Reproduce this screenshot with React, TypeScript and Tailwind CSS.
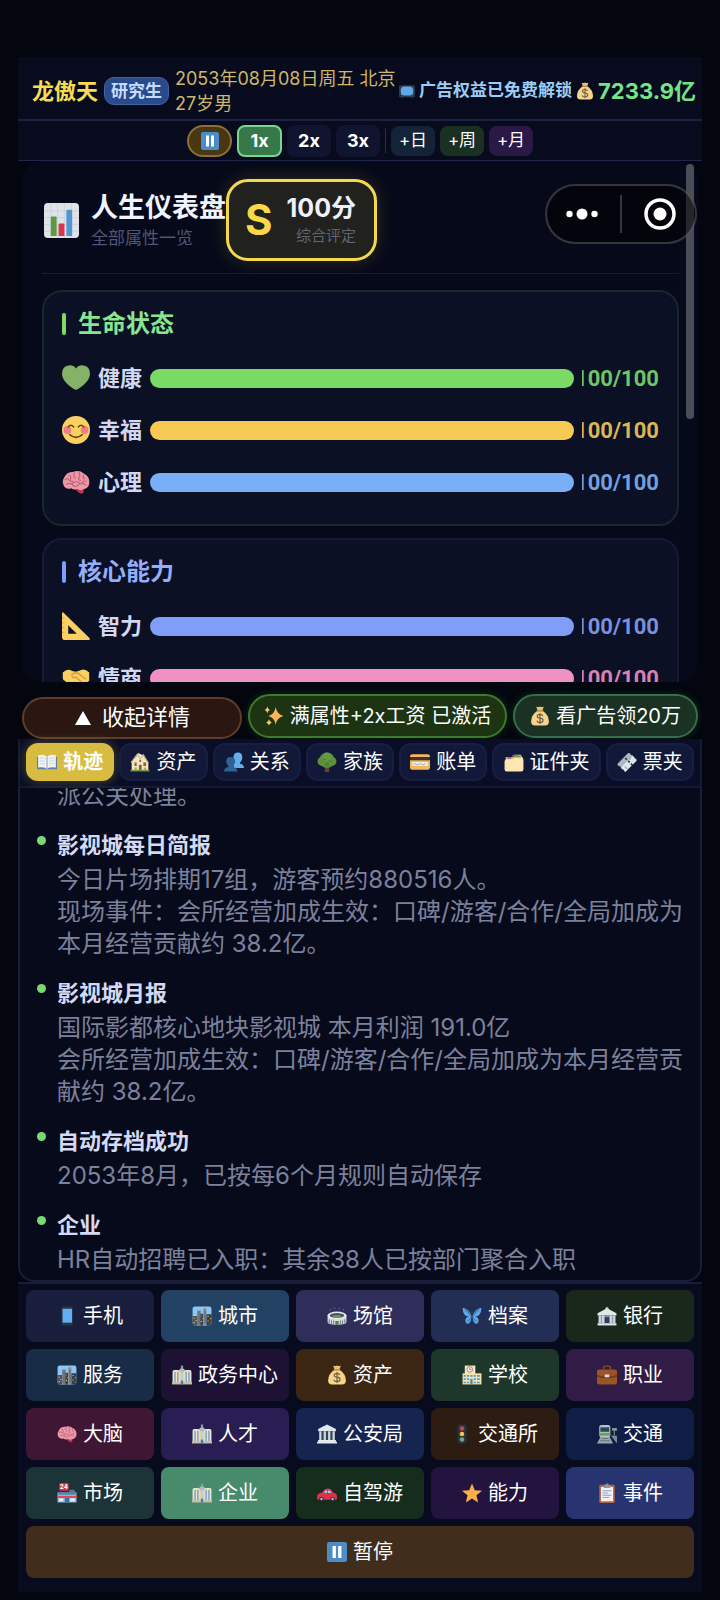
import type { ReactNode } from "react";
import clsx from "clsx";

interface IconProps {
  name: string;
  className?: string;
}

const officeBlock = (
  <>
    <path d="M16 1h4v9h-4z" fill="#8a97a5" />
    <path d="M12 10q6-8 12 0v24H12z" fill="#b3bcc5" />
    <path d="M1 12q0-3 3-3h6q4 0 4 3v20H1zM22 12q0-3 4-3h6q3 0 3 3v20H22z" fill="#efe4c6" />
    <path d="M4 12h3v19H4zM9 12h3v19H9zM24 12h3v19h-3zM29 12h3v19h-3z" fill="#86a9cf" />
    <path d="M15 13h2v18h-2zM19 13h2v18h-2z" fill="#f0dfae" />
    <path d="M0 31h36v4H0z" fill="#c9bfa6" />
    <path d="M16 28h4v7h-4z" fill="#4a78a8" />
  </>
);

const skyline = (
  <>
    <rect x="1" y="1" width="34" height="34" rx="4" fill="#8cc6f5" />
    <path d="M1 18h8v17H5q-4 0-4-4z" fill="#4b5560" />
    <path d="M9 8h7v27H9z" fill="#7d868f" />
    <path d="M15 14h5v21h-5z" fill="#39434d" />
    <path d="M20 5l3-2 3 2v30h-6z" fill="#8b949d" />
    <path d="M26 15h9v16q0 4-4 4h-5z" fill="#343e48" />
    <path d="M11 10h1v23h-1zM13 10h1v23h-1zM22 8h1v24h-1zM24 8h1v24h-1z" fill="#5a646e" />
    <path
      d="M3 21h2v2H3zM6 25h2v2H6zM3 29h2v2H3zM16 17h1v2h-1zM18 22h1v2h-1zM16 27h2v2h-2zM28 18h2v2h-2zM32 22h2v2h-2zM28 26h2v2h-2zM32 30h1v2h-1z"
      fill="#f3cf5b"
    />
  </>
);

const ICONS: Record<string, ReactNode> = {
  pause: (
    <>
      <rect width="36" height="36" rx="4" fill="#4a8dc8" />
      <path d="M10 7h6v22h-6zM20 7h6v22h-6z" fill="#fff" />
    </>
  ),
  tv: (
    <>
      <rect y="5" width="36" height="27" rx="3" fill="#2c3a4a" />
      <rect x="4" y="8" width="28" height="20" rx="8" fill="#61a6ea" />
      <path d="M5 32h5v2H5zM26 32h5v2h-5z" fill="#2c3a4a" />
    </>
  ),
  money: (
    <>
      <path d="M11 1q3 2 7 0 4 2 7 0l-3 8h-8z" fill="#e8c27a" />
      <path d="M14 8h8q12 8 12 20 0 7-7 7H9q-7 0-7-7Q2 16 14 8z" fill="#f7d48c" />
      <path d="M12 7.500h12v2.500H12z" fill="#b5883f" />
      <path
        d="M23 18q-1-3-5-3-5 0-5 3.500 0 3 5 3.500 5.500.500 5.500 4T18 30q-5 0-5.500-3.500M18 12.500v20"
        fill="none"
        stroke="#6d604a"
        strokeWidth="2.200"
      />
    </>
  ),
  chart: (
    <>
      <rect width="36" height="36" rx="4" fill="#dfe3e8" />
      <path
        d="M0 8h36M0 15h36M0 22h36M0 29h36M7 0v36M14 0v36M21 0v36M28 0v36"
        stroke="#cbd3da"
        strokeWidth="1"
      />
      <path d="M7 15q0-1 1-1h4q1 0 1 1v19H7z" fill="#5c9a41" />
      <path d="M15 22q0-1 1-1h4q1 0 1 1v12h-6z" fill="#d73848" />
      <path d="M23 8q0-1 1-1h4q1 0 1 1v26h-6z" fill="#5296d5" />
    </>
  ),
  heart: (
    <path
      d="M35.900 11.800A9.900 9.900 0 0 0 18 5.700 9.900 9.900 0 0 0 .100 11.800C-.700 20 9 29 18 33.500 27 29 36.700 20 35.900 11.800z"
      fill="#84b266"
    />
  ),
  smile: (
    <>
      <circle cx="18" cy="18" r="18" fill="#fbd062" />
      <circle cx="7" cy="18" r="5" fill="#ee7f84" />
      <circle cx="29" cy="18" r="5" fill="#ee7f84" />
      <path
        d="M8 14q3.500-4 7 0M21 14q3.500-4 7 0M10 24q8 7 16 0"
        fill="none"
        stroke="#664500"
        strokeWidth="2"
        strokeLinecap="round"
      />
    </>
  ),
  brain: (
    <>
      <path d="M18 26q5-2 9 1 2 4-1 6-4 0-8-5z" fill="#c8364a" />
      <path
        d="M3 24Q-1 18 3 12 6 5 14 5q8-3 14 2 8 4 7 12 0 6-6 8-5 3-9 0-5 2-8-1-6 2-9-2z"
        fill="#ee97a6"
      />
      <path
        d="M4 15q4-3 5 1M9 9q3 1 2 5t3 3M16 6q-2 4 1 7M22 6q2 3 0 6t2 4M28 9q-2 3 1 5M31 17q-4-1-5 2M6 21q5-3 8 1t8-1q4-3 9 1M13 20q5-4 9-1"
        fill="none"
        stroke="#ba6577"
        strokeWidth="1.500"
        strokeLinecap="round"
      />
    </>
  ),
  ruler: (
    <>
      <path d="M0 2Q0-1 2 1l33 32q2 3-1 3H4q-4 0-4-4zM8 17v11h11z" fill="#fbcf62" fillRule="evenodd" />
      <path d="M0 8h3M0 14h3M0 20h3M0 26h3" stroke="#d39b35" strokeWidth="1" />
    </>
  ),
  handshake: (
    <>
      <path d="M1 11q6-6 12-2l5 1 6-2q5-3 11 3v11q-3 1-6 5l-8 5q-4 2-7-1L4 22q-3-1-3-4z" fill="#f9cf62" />
      <path
        d="M13 13q4-3 8-1l9 7M13 13q-1 6 5 4l8 7M8 24l4 5M13 27l3 4"
        fill="none"
        stroke="#d99b36"
        strokeWidth="1.800"
        strokeLinecap="round"
      />
    </>
  ),
  up: <path d="M18 4l16 28H2z" fill="#fff" />,
  sparkles: (
    <>
      <path d="M21 2q2 13 14 16-12 3-14 16-2-13-13-16 11-3 13-16z" fill="#fdb257" />
      <path d="M6 1q1 5 5 6-4 1-5 6-1-5-5-6 4-1 5-6zM9 24q1 5 5 6-4 1-5 5-1-4-5-5 4-1 5-6z" fill="#fdcb62" />
    </>
  ),
  book: (
    <>
      <path d="M0 9h36v22H0z" fill="#5b82a5" />
      <path d="M2 6q9-3 16 2 7-5 16-2v22q-9-2-16 2-7-4-16-2z" fill="#eef2f5" />
      <path d="M18 8v22" stroke="#9aa7b2" strokeWidth="2" />
      <path
        d="M5 11q5-1 9 1M5 16q5-1 9 1M5 21q5-1 9 1M22 12q4-2 9-1M22 17q4-2 9-1M22 22q4-2 9-1"
        stroke="#c6cfd6"
        strokeWidth="1.500"
        fill="none"
      />
    </>
  ),
  house: (
    <>
      <path d="M3 18L12 7l3-5 4 2 5 2 2 4 7 10v13H3z" fill="#f4e5bd" />
      <path d="M2 19L13 4l5 7M18 13l6-8 9 15" stroke="#cdbd94" strokeWidth="2" fill="none" />
      <path d="M8 19h4v6H8zM17 14h3v4h-3zM24 19h5v6h-5z" fill="#7c6a48" />
      <path d="M16 23h5v10h-5z" fill="#8a6439" />
      <path d="M1 32h34v3H1z" fill="#6e9c45" />
      <path d="M8 28h4v5H8zM25 28h4v5h-4z" fill="#c79f55" />
    </>
  ),
  people: (
    <>
      <path d="M25 1q8 0 8 9 0 6-4 9v2q7 1 7 8H17v-9q3 0 3-2-3-3-3-8 0-9 8-9z" fill="#65aef0" />
      <path d="M12 9q8 0 8 8 0 5-4 8v2q8 1 8 8H0q0-7 8-8v-2q-4-3-4-8 0-8 8-8z" fill="#2f6296" />
    </>
  ),
  tree: (
    <>
      <path d="M15 22h6l1 14h-8z" fill="#6b4329" />
      <circle cx="18" cy="15" r="14" fill="#568a3d" />
      <circle cx="9" cy="17" r="8" fill="#5c913e" />
      <circle cx="27" cy="17" r="8" fill="#5c913e" />
      <circle cx="18" cy="9" r="8" fill="#639a43" />
      <path d="M11 12q2 3 5 1M21 16q2 2 5 0M15 21q3 2 6 0" stroke="#3d6b2b" strokeWidth="1.500" fill="none" />
    </>
  ),
  card: (
    <>
      <rect y="4" width="36" height="28" rx="4" fill="#f6b65a" />
      <path d="M0 9h36v6H0z" fill="#3d3328" />
      <path d="M4 18h28v7H4z" fill="#f3ede0" />
      <path d="M6 22q3-3 5 0t5 0 5 0 7-1" stroke="#7390b5" strokeWidth="1.200" fill="none" />
    </>
  ),
  folder: (
    <>
      <path d="M3 9h14l3-4h10l4 6v8H3z" fill="#f3b85b" />
      <path d="M4 12h9v-3H7zM14 8h9V5h-7z" fill="#8e5bb5" />
      <path d="M17 11h13V7l-9-2z" fill="#6c9d45" />
      <path d="M1 17q0-4 4-4h11l3-3h12q4 0 4 4v17q0 4-4 4H5q-4 0-4-4z" fill="#fbe6b4" />
    </>
  ),
  ticket: (
    <>
      <path d="M1 21L20 2q2-1 4 1 0 3 4 3 2 2 1 4L10 29q-2 1-3-1 0-3-4-3-3-2-2-4z" fill="#a9b8c3" />
      <path d="M8 27L27 8q2-1 4 1 0 3 3 3 2 2 1 4L16 35q-2 1-3-1 0-3-4-3-2-2-1-4z" fill="#dfe6eb" />
      <path d="M15 11l13 13" stroke="#26303d" strokeWidth="3" strokeDasharray="4 3" />
      <path d="M14 26l5 5M22 14l3-3" stroke="#9badba" strokeWidth="2" />
    </>
  ),
  phone: (
    <>
      <rect x="8" y="1" width="21" height="34" rx="3" fill="#263646" />
      <path d="M10 5h17v25H10z" fill="#63aef2" />
    </>
  ),
  city: skyline,
  stadium: (
    <>
      <path d="M1 16v13q0 5 17 5t17-5V16z" fill="#d5dbe0" />
      <ellipse cx="18" cy="17" rx="17" ry="7" fill="#e4e9ec" />
      <ellipse cx="18" cy="17" rx="13" ry="4.500" fill="#4c5763" />
      <ellipse cx="18" cy="19" rx="8" ry="2.500" fill="#6aa250" />
      <path
        d="M4 24v7M8 26v7M12 26v7M24 26v7M28 26v7M32 24v7"
        stroke="#6d7985"
        strokeWidth="1.800"
      />
      <path d="M15 27h6v7h-6z" fill="#56804a" />
      <path d="M6 8V5M14 6V3M22 6V3M30 8V5" stroke="#8d7583" strokeWidth="1.500" />
    </>
  ),
  butterfly: (
    <>
      <path d="M17 18Q13 5 1 3q0 8 4 13 3 3 8 3-7 1-7 7 0 5 4 6 5 0 7-10z" fill="#5da8e8" />
      <path d="M19 18Q23 5 35 3q0 8-4 13-3 3-8 3 7 1 7 7 0 5-4 6-5 0-7-10z" fill="#5da8e8" />
      <path
        d="M5 7q7 3 10 10M31 7q-7 3-10 10M10 28q4-2 6-7M26 28q-4-2-6-7"
        stroke="#2c5f96"
        strokeWidth="1.500"
        fill="none"
      />
      <path d="M18 13v14M18 13l-4-7M18 13l4-7" stroke="#29405c" strokeWidth="1.800" />
    </>
  ),
  bank: (
    <>
      <path d="M18 1l3 3v4h-6V4z" fill="#a5b3bf" />
      <path d="M18 4l17 9v4H1v-4z" fill="#e0e7ec" />
      <path d="M3 17h30v14H3z" fill="#8997a2" />
      <path d="M3 17h4v14H3zM9 17h4v14H9zM23 17h4v14h-4zM29 17h4v14h-4z" fill="#ccd6dd" />
      <path d="M14 20h8v11h-8z" fill="#2e3e52" />
      <path d="M1 31h34v4H1z" fill="#dfe6eb" />
    </>
  ),
  office: officeBlock,
  school: (
    <>
      <path d="M5 1h19v18H5z" fill="#f3e6c0" />
      <circle cx="14" cy="8" r="5" fill="#fff" stroke="#8b6d5d" strokeWidth="1.500" />
      <path d="M14 5v3h3" stroke="#d33" strokeWidth="1.500" fill="none" />
      <path d="M1 15h34v20H1z" fill="#f5e2aa" />
      <path
        d="M3 18h4v3H3zM9 18h4v3H9zM15 18h4v3h-4zM21 18h4v3h-4zM27 18h5v3h-5zM3 24h4v3H3zM9 24h4v3H9zM21 24h4v3h-4zM27 24h5v3h-5zM3 30h4v3H3zM9 30h4v3H9zM21 30h4v3h-4zM27 30h5v3h-5z"
        fill="#5a9bd6"
      />
      <path d="M15 25h4v10h-4z" fill="#4b88b8" />
    </>
  ),
  briefcase: (
    <>
      <path d="M12 8V4q0-2 2-2h8q2 0 2 2v4" fill="none" stroke="#8a4a22" strokeWidth="2.500" />
      <rect y="8" width="36" height="27" rx="4" fill="#9a5428" />
      <path d="M0 18q18 6 36 0v3q-18 6-36 0z" fill="#723a1c" />
      <rect x="14" y="17" width="8" height="5" rx="1" fill="#dfe4e8" />
    </>
  ),
  temple: (
    <>
      <path d="M18 1l16 8v4H2V9z" fill="#dfe6eb" />
      <path d="M5 13h26v17H5z" fill="#34465a" />
      <path d="M4 13h4v17H4zM12 13h4v17h-4zM20 13h4v17h-4zM28 13h4v17h-4z" fill="#d0d9e0" />
      <path d="M2 29h32v3H2zM0 32h36v3H0z" fill="#e3e9ed" />
    </>
  ),
  light: (
    <>
      <rect x="10" y="1" width="16" height="34" rx="4" fill="#26343f" />
      <circle cx="18" cy="8" r="4" fill="#c9434d" />
      <circle cx="18" cy="18" r="4" fill="#f0c35a" />
      <circle cx="18" cy="28" r="4" fill="#7aa380" />
    </>
  ),
  station: (
    <>
      <path d="M7 22h15l7 13H0z" fill="#98a3ac" />
      <path d="M9 26h11M6 30h17" stroke="#5d6973" strokeWidth="1.500" />
      <rect x="4" y="2" width="20" height="22" rx="4" fill="#b3c2cc" />
      <path d="M6 6h16v8H6z" fill="#2c4658" />
      <path d="M4 16h20v5H4z" fill="#65a652" />
      <path d="M25 21h11v14z" fill="#7b8894" />
      <path d="M31 8v13M28 8h7v3h-7z" stroke="#7c8a96" strokeWidth="2" fill="#c8d4dc" />
    </>
  ),
  store: (
    <>
      <rect x="4" width="17" height="14" rx="2" fill="#d8313f" />
      <text x="12.500" y="11.500" textAnchor="middle" fontSize="12" fontWeight="700" fill="#fff" fontFamily="Roboto, sans-serif">
        24
      </text>
      <path d="M1 17h34v18H1z" fill="#9fc0df" />
      <path d="M1 17h34v4H1z" fill="#4a84bb" />
      <path d="M0 23h36v4H0z" fill="#dc4a55" />
      <path d="M4 28h7v5H4zM24 28h8v5h-8z" fill="#e8f1f8" />
      <path d="M14 27h8v8h-8z" fill="#3d6f9e" />
      <path d="M22 12h9l2 5H22z" fill="#5c7891" />
    </>
  ),
  car: (
    <>
      <path d="M0 25q0-6 6-7l3-1q4-7 11-7 6 0 9 7 7 1 7 8v3q0 2-2 2H2q-2 0-2-2z" fill="#dc3146" />
      <path d="M12 17q3-4 6-4v5zM20 13q4 0 6 5h-6z" fill="#a9d1f2" />
      <circle cx="8" cy="29" r="4" fill="#28343f" />
      <circle cx="28" cy="29" r="4" fill="#28343f" />
      <circle cx="8" cy="29" r="2" fill="#ccd6dd" />
      <circle cx="28" cy="29" r="2" fill="#ccd6dd" />
    </>
  ),
  star: <path d="M18 1l5 12 13 1-10 8 3 13-11-7-11 7 3-13L0 14l13-1z" fill="#fdaf4a" />,
  clipboard: (
    <>
      <rect x="4" y="3" width="28" height="33" rx="2" fill="#b35f3d" />
      <path d="M7 7h22v26H7z" fill="#f0f2f6" />
      <path d="M12 4h3q0-3 3-3t3 3h3v5H12z" fill="#8e9aa6" />
      <path d="M10 14h16M10 18h10M10 22h16M10 26h12" stroke="#8c9cc0" strokeWidth="1.800" />
    </>
  ),
};

const Icon = ({ name, className }: IconProps) => (
  <svg viewBox="0 0 36 36" className={clsx("shrink-0", className)} aria-hidden="true">
    {ICONS[name]}
  </svg>
);

const vitals = [
  { icon: "heart", label: "健康", bar: "bg-[#7ada66]", text: "text-[#6fc763]" },
  { icon: "smile", label: "幸福", bar: "bg-[#f6c955]", text: "text-[#dcb556]" },
  { icon: "brain", label: "心理", bar: "bg-[#78aff6]", text: "text-[#74a0e0]" },
];

const abilities = [
  { icon: "ruler", label: "智力", bar: "bg-[#809ef8]", text: "text-[#7a91dd]" },
  { icon: "handshake", label: "情商", bar: "bg-[#ef91c4]", text: "text-[#d983b4]" },
];

const tabs = [
  { icon: "book", label: "轨迹" },
  { icon: "house", label: "资产" },
  { icon: "people", label: "关系" },
  { icon: "tree", label: "家族" },
  { icon: "card", label: "账单" },
  { icon: "folder", label: "证件夹" },
  { icon: "ticket", label: "票夹" },
];

const logs = [
  {
    title: "影视城每日简报",
    lines: [
      "今日片场排期17组，游客预约880516人。",
      "现场事件：会所经营加成生效：口碑/游客/合作/全局加成为本月经营贡献约 38.2亿。",
    ],
  },
  {
    title: "影视城月报",
    lines: [
      "国际影都核心地块影视城 本月利润 191.0亿",
      "会所经营加成生效：口碑/游客/合作/全局加成为本月经营贡献约 38.2亿。",
    ],
  },
  { title: "自动存档成功", lines: ["2053年8月，已按每6个月规则自动保存"] },
  { title: "企业", lines: ["HR自动招聘已入职：其余38人已按部门聚合入职"] },
];

const actions = [
  { icon: "phone", label: "手机", bg: "bg-[#181e3c]" },
  { icon: "city", label: "城市", bg: "bg-[#234263]" },
  { icon: "stadium", label: "场馆", bg: "bg-[#2f2e5b]" },
  { icon: "butterfly", label: "档案", bg: "bg-[#222e53]" },
  { icon: "bank", label: "银行", bg: "bg-[#19281a]" },
  { icon: "city", label: "服务", bg: "bg-[#182c46]" },
  { icon: "office", label: "政务中心", bg: "bg-[#1e1234]" },
  { icon: "money", label: "资产", bg: "bg-[#3b2614]" },
  { icon: "school", label: "学校", bg: "bg-[#1d382b]" },
  { icon: "briefcase", label: "职业", bg: "bg-[#311c45]" },
  { icon: "brain", label: "大脑", bg: "bg-[#3f1634]" },
  { icon: "office", label: "人才", bg: "bg-[#281e54]" },
  { icon: "temple", label: "公安局", bg: "bg-[#162450]" },
  { icon: "light", label: "交通所", bg: "bg-[#2d1c11]" },
  { icon: "station", label: "交通", bg: "bg-[#101e46]" },
  { icon: "store", label: "市场", bg: "bg-[#1c3438]" },
  { icon: "office", label: "企业", bg: "bg-[#478a6c]" },
  { icon: "car", label: "自驾游", bg: "bg-[#162d1e]" },
  { icon: "star", label: "能力", bg: "bg-[#22133f]" },
  { icon: "clipboard", label: "事件", bg: "bg-[#27346f]" },
];

interface StatCardProps {
  title: string;
  stats: typeof vitals;
  border: string;
  accent: string;
  color: string;
}

const StatCard = ({ title, stats, border, accent, color }: StatCardProps) => (
  <section className={clsx("rounded-[20px] border-2 bg-[#0b1024] px-[18px] py-4", border)}>
    <h2 className={clsx("flex items-center gap-3 text-[24px] leading-8 font-bold", color)}>
      <span className={clsx("h-[22px] w-1 rounded-sm", accent)} />
      {title}
    </h2>
    <ul className="mt-3">
      {stats.map((s) => (
        <li key={s.label} className="flex h-[52px] items-center gap-2">
          <Icon name={s.icon} className="size-7" />
          <span className="text-[22px] font-bold text-[#d3d8f2]">{s.label}</span>
          <span className={clsx("h-[19px] flex-1 rounded-full", s.bar)} />
          <span
            className={clsx(
              "flex w-[77px] justify-end overflow-hidden font-[Roboto,sans-serif] text-[22px] font-bold",
              s.text
            )}
          >
            100/100
          </span>
        </li>
      ))}
    </ul>
  </section>
);

const Header = () => (
  <header className="flex h-16 shrink-0 items-center border-b-2 border-[#1b2140] bg-[#080b1d] pt-1.5 pr-1.5 pl-3.5">
    <span className="shrink-0 text-[22px] font-bold text-[#f4dd55]">龙傲天</span>
    <span className="ml-1.5 shrink-0 rounded-[10px] border border-[#41639f] bg-[#294b8c] px-1.5 text-[17px] leading-[26px] font-bold text-[#c6dcff]">
      研究生
    </span>
    <p className="ml-1.5 flex-1 text-[18px] leading-[25px] text-[#cdb86a]">2053年08月08日周五 北京 27岁男</p>
    <span className="flex shrink-0 items-center gap-1 text-[17px] font-bold text-[#9bcdf6]">
      <Icon name="tv" className="size-4" />
      广告权益已免费解锁
    </span>
    <span className="ml-1 flex shrink-0 items-center gap-1 text-[22px] font-bold text-[#77e389]">
      <Icon name="money" className="size-[18px]" />
      7233.9亿
    </span>
  </header>
);

const SpeedBar = () => (
  <div className="flex h-10 shrink-0 items-center justify-center gap-[5px] border-b border-[#20264a] bg-[#080b1d] text-white">
    <button
      aria-label="暂停"
      className="flex h-8 w-[45px] items-center justify-center rounded-full border-2 border-[#8d7035] bg-[#493613]"
    >
      <Icon name="pause" className="size-[18px]" />
    </button>
    <button className="h-8 w-[45px] rounded-lg border-2 border-[#7bd691] bg-[#36784a] text-[18px] font-bold">1x</button>
    <button className="h-8 w-11 rounded-lg bg-[#10142e] text-[18px] font-bold">2x</button>
    <button className="h-8 w-11 rounded-lg bg-[#10142e] text-[18px] font-bold">3x</button>
    <span className="h-[25px] w-px bg-[#282d4d]" />
    <button className="h-[30px] w-11 rounded-lg bg-[#132438] text-[17px]">+日</button>
    <button className="h-[30px] w-11 rounded-lg bg-[#1a3023] text-[17px]">+周</button>
    <button className="h-[30px] w-11 rounded-lg bg-[#2a1847] text-[17px]">+月</button>
  </div>
);

const Dashboard = () => (
  <div className="relative min-h-0 flex-[18_1_0] overflow-hidden">
    <div className="mx-1 h-full overflow-hidden rounded-[20px] bg-[#060919] pr-[19px] pl-5">
      <div className="mb-4 flex h-[113px] items-center border-b border-[#171c33] pt-1.5">
        <Icon name="chart" className="ml-0.5 size-[35px]" />
        <div className="ml-3 w-[135px] whitespace-nowrap">
          <h1 className="text-[27px] leading-9 font-bold text-[#f1f3ff]">人生仪表盘</h1>
          <p className="text-[17px] leading-6 text-[#505674]">全部属性一览</p>
        </div>
        <div className="relative flex h-[82px] w-[151px] items-center justify-between rounded-[22px] border-[3px] border-[#f4d94f] bg-[#21211d] pr-[18px] pl-4 shadow-[0_0_18px_rgba(244,217,79,0.18)]">
          <span className="text-[42px] leading-none font-bold text-[#f9d849]">S</span>
          <div className="text-right">
            <p className="text-[25px] leading-8 font-bold text-[#eef0fa]">100分</p>
            <p className="text-[15px] leading-6 text-[#626473]">综合评定</p>
          </div>
        </div>
      </div>
      <div className="flex flex-col gap-3">
        <StatCard
          title="生命状态"
          stats={vitals}
          border="border-[#17272c]"
          accent="bg-[#7ada66]"
          color="text-[#8ae591]"
        />
        <StatCard
          title="核心能力"
          stats={abilities}
          border="border-[#151b36]"
          accent="bg-[#809ef8]"
          color="text-[#93aefa]"
        />
      </div>
    </div>
    <div className="absolute top-[3px] right-2 h-[255px] w-2 rounded-full bg-[#4b4d56]" />
    <div className="absolute top-[23px] right-[5px] flex h-[60px] w-[152px] items-center justify-center gap-[22px] rounded-full border-2 border-white/20 bg-black/50">
      <button aria-label="更多">
        <svg viewBox="0 0 32 12" className="h-3 w-8" fill="#fff">
          <circle cx="3.500" cy="6" r="3.200" />
          <circle cx="16" cy="6" r="5.500" />
          <circle cx="28.500" cy="6" r="3.200" />
        </svg>
      </button>
      <span className="h-[38px] w-0.5 bg-white/20" />
      <button aria-label="关闭">
        <svg viewBox="0 0 32 32" className="size-8">
          <circle cx="16" cy="16" r="14" fill="none" stroke="#fff" strokeWidth="3.500" />
          <circle cx="16" cy="16" r="6.500" fill="#fff" />
        </svg>
      </button>
    </div>
  </div>
);

export default function App() {
  return (
    <div className="h-screen bg-[#03060e] px-[18px] pt-[57px] pb-2 font-[Inter,'Noto_Sans_CJK_SC',sans-serif]">
      <main className="flex h-full flex-col">
        <Header />
        <SpeedBar />
        <Dashboard />

        <div className="flex h-[57px] shrink-0 items-end gap-1.5 px-1 text-[20px] text-white">
          <button className="flex h-[42px] flex-1 items-center justify-center gap-2.5 rounded-full border-2 border-[#613c2a] bg-[#2a1712] text-[22px]">
            <Icon name="up" className="size-[18px]" />
            收起详情
          </button>
          <button className="mb-px flex h-11 items-center gap-1.5 rounded-full border-2 border-[#3d7a2c] bg-[#1d3412] px-3.5 shadow-[0_0_10px_rgba(61,122,44,0.3)]">
            <Icon name="sparkles" className="size-5" />
            满属性+2x工资 已激活
          </button>
          <button className="mb-px flex h-11 items-center gap-1.5 rounded-full border-2 border-[#33704a] bg-[#1a3123] px-[15px] shadow-[0_0_10px_rgba(51,112,74,0.3)]">
            <Icon name="money" className="size-5" />
            看广告领20万
          </button>
        </div>

        <nav className="flex h-[49px] shrink-0 items-center gap-[5px] border-x-2 border-b-2 border-[#141a33] bg-[#090e26] px-1.5">
          {tabs.map((tab, i) => (
            <button
              key={tab.label}
              className={clsx(
                "flex h-[38px] flex-auto items-center justify-center gap-1.5 rounded-xl border-2 text-[20px] text-white",
                i === 0
                  ? "border-[#d8bc42] bg-[#d8bc42] font-bold shadow-[0_0_12px_rgba(216,188,66,0.35)]"
                  : "border-[#171e42] bg-[#121838]"
              )}
            >
              <Icon name={tab.icon} className="size-5" />
              {tab.label}
            </button>
          ))}
        </nav>

        <section className="min-h-0 flex-[17_1_0] overflow-hidden rounded-b-[16px] border-x-2 border-b-2 border-[#181e3a] bg-[#070a1a] pr-3 pl-[37px]">
          <p className="-mt-2 text-[24px] leading-8 text-[#7c819c]">派公关处理。</p>
          {logs.map((log) => (
            <article key={log.title} className="relative mt-[18px]">
              <span className="absolute top-1.5 -left-5 size-[9px] rounded-full bg-[#7bd870]" />
              <h3 className="text-[22px] leading-[30px] font-bold text-[#d5daf4]">{log.title}</h3>
              <div className="mt-1 text-[24px] leading-8 text-[#7c819c]">
                {log.lines.map((line) => (
                  <p key={line}>{line}</p>
                ))}
              </div>
            </article>
          ))}
        </section>

        <div className="grid shrink-0 grid-cols-5 gap-[7px] border-t-2 border-[#181e3a] bg-[#070b1d] px-2 pt-1.5 pb-3.5 text-[20px] text-white">
          {actions.map((a) => (
            <button
              key={a.label + a.bg}
              className={clsx(
                "flex h-[52px] items-center justify-center gap-1.5 rounded-lg whitespace-nowrap",
                a.bg
              )}
            >
              <Icon name={a.icon} className="size-5" />
              {a.label}
            </button>
          ))}
          <button className="col-span-5 flex h-[52px] items-center justify-center gap-1.5 rounded-lg bg-[#412d1b]">
            <Icon name="pause" className="size-5" />
            暂停
          </button>
        </div>
      </main>
    </div>
  );
}
